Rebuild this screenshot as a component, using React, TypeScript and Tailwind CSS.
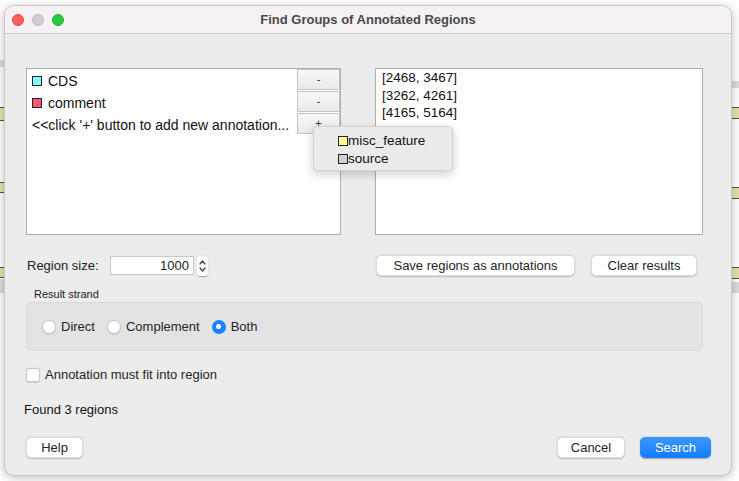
import React from "react";

const font = { fontFamily: '"Liberation Sans", Arial, sans-serif' };

function TrafficLights() {
  return (
    <div className="flex items-center gap-[8px] pl-[7px]">
      <span className="w-[12px] h-[12px] rounded-full bg-[#fe5f57] border border-[#e2463f]" />
      <span className="w-[12px] h-[12px] rounded-full bg-[#d1cdd2] border border-[#bfbbc0]" />
      <span className="w-[12px] h-[12px] rounded-full bg-[#28c840] border border-[#1aab29]" />
    </div>
  );
}

function RowButton(props: { label: string }) {
  return (
    <div className="w-[43px] h-[21px] mb-[1px] flex items-center justify-center bg-gradient-to-b from-[#f7f7f7] to-[#ebebeb] border border-[#c4c4c4] text-[11px] text-[#333] leading-none">
      {props.label}
    </div>
  );
}

function Radio(props: { checked?: boolean; label: string }) {
  return (
    <label className="flex items-center gap-[5px] mr-[12px]">
      {props.checked ? (
        <span className="w-[14px] h-[14px] rounded-full bg-[#1a82fb] flex items-center justify-center">
          <span className="w-[5px] h-[5px] rounded-full bg-white" />
        </span>
      ) : (
        <span className="w-[14px] h-[14px] rounded-full bg-white border border-[#c6c6c6] shadow-[0_0.5px_1px_rgba(0,0,0,0.15)]" />
      )}
      <span className="text-[13px] text-[#262626]">{props.label}</span>
    </label>
  );
}

function MacButton(props: { label: string; width: string; primary?: boolean }) {
  return (
    <button
      className={
        props.primary
          ? `${props.width} h-[21px] rounded-[5px] bg-gradient-to-b from-[#3b98fd] to-[#0f7bfd] text-white text-[13px] leading-none shadow-[0_0.5px_1.5px_rgba(0,0,0,0.3)]`
          : `${props.width} h-[21px] rounded-[5px] bg-white text-[#262626] text-[13px] leading-none border border-[#dcdcdc] shadow-[0_0.5px_1.5px_rgba(0,0,0,0.2)]`
      }
    >
      {props.label}
    </button>
  );
}

export default function App() {
  return (
    <div
      className="relative w-[739px] h-[481px] bg-white overflow-hidden pl-[4px] pt-[5px]"
      style={font}
    >
      {/* bits of the window behind */}
      <div className="absolute right-0 top-[81px] w-[10px] h-[7px] bg-[#dcdcdc]" />
      <div className="absolute right-0 top-[107px] w-[10px] h-[12px] bg-[#e4e2a8] border-y border-[#555]" />
      <div className="absolute right-0 top-[187px] w-[10px] h-[12px] bg-[#e4e2a8] border-y border-[#555]" />
      <div className="absolute right-0 top-[267px] w-[10px] h-[12px] bg-[#e4e2a8] border-y border-[#555]" />
      <div className="absolute right-0 top-[282px] w-[10px] h-[11px] bg-[#dcdcdc]" />
      <div className="absolute left-0 top-[60px] w-[4px] h-[7px] bg-[#dcdcdc]" />
      <div className="absolute left-0 top-[107px] w-[4px] h-[14px] bg-[#e4e2a8] border-y border-[#555]" />
      <div className="absolute left-0 top-[182px] w-[4px] h-[11px] bg-[#e4e2a8] border-y border-[#555]" />
      <div className="absolute left-0 top-[267px] w-[4px] h-[11px] bg-[#e4e2a8] border-y border-[#555]" />
      <div className="absolute left-0 top-[279px] w-[4px] h-[14px] bg-[#dcdcdc]" />

      <div className="relative w-[728px] h-[471px] rounded-[10px] overflow-hidden border border-[#c9c6c9] shadow-[0_2px_10px_rgba(0,0,0,0.25)] flex flex-col bg-[#ececec]">
        {/* title bar */}
        <div className="h-[28px] shrink-0 bg-[#f6f1f5] border-b border-[#c8c8c8] relative flex items-center">
          <TrafficLights />
          <div className="absolute inset-0 flex items-center justify-center text-[13px] font-bold text-[#4a4a4a] pointer-events-none">
            Find Groups of Annotated Regions
          </div>
        </div>

        {/* body */}
        <div className="flex-1 flex flex-col pl-[21px] pr-[28px] pt-[34px] text-[#222]">
          <div className="flex gap-[34px]">
            {/* annotation list */}
            <div className="relative w-[315px] h-[167px] bg-white border border-[#acacac] flex">
              <div className="flex-1 pl-[5px] pt-[1px] text-[14px] text-[#111]">
                <div className="h-[22px] flex items-center gap-[6px]">
                  <span className="w-[10px] h-[10px] bg-[#80ffff] border border-[#222]" />
                  CDS
                </div>
                <div className="h-[22px] flex items-center gap-[6px]">
                  <span className="w-[10px] h-[10px] bg-[#f7586f] border border-[#222]" />
                  comment
                </div>
                <div className="h-[22px] flex items-center">
                  {"<<click '+' button to add new annotation..."}
                </div>
              </div>
              <div className="flex flex-col">
                <RowButton label="-" />
                <RowButton label="-" />
                <RowButton label="+" />
              </div>

              {/* popup menu */}
              <div className="absolute left-[286px] top-[57px] w-[140px] h-[45px] z-10 rounded-[4px] bg-[#ebebeb] border border-[#d2d2d2] shadow-[0_3px_10px_rgba(0,0,0,0.2)] pt-[5px] pl-[24px] text-[13.5px] text-[#111]">
                <div className="h-[18px] flex items-center">
                  <span className="w-[10px] h-[10px] bg-[#ffff99] border border-[#222]" />
                  misc_feature
                </div>
                <div className="h-[18px] flex items-center">
                  <span className="w-[10px] h-[10px] bg-[#d0d0d0] border border-[#222]" />
                  source
                </div>
              </div>
            </div>

            {/* results list */}
            <div className="w-[328px] h-[167px] bg-white border border-[#acacac] pl-[6px] text-[13.5px] text-[#111] leading-[17.5px]">
              <div>[2468, 3467]</div>
              <div>[3262, 4261]</div>
              <div>[4165, 5164]</div>
            </div>
          </div>

          {/* region size row */}
          <div className="flex items-center mt-[20px] h-[21px]">
            <span className="text-[13px] w-[84px] pl-[1px]">Region size:</span>
            <div className="w-[84px] h-[19px] bg-white border border-[#c8c8c8] text-[13px] text-right pr-[4px] leading-[18px]">
              1000
            </div>
            <div className="ml-[3px] w-[11px] h-[20px] rounded-[3px] bg-white shadow-[0_0.5px_1px_rgba(0,0,0,0.3)] flex flex-col items-center justify-center">
              <svg width="9" height="18" viewBox="0 0 9 18" fill="none" stroke="#444" strokeWidth="1.3" strokeLinecap="round" strokeLinejoin="round">
                <path d="M2 7 L4.5 4 L7 7" />
                <path d="M2 11 L4.5 14 L7 11" />
              </svg>
            </div>
            <div className="flex-1" />
            <MacButton label="Save regions as annotations" width="w-[199px]" />
            <div className="w-[16px]" />
            <MacButton label="Clear results" width="w-[106px]" />
            <div className="w-[6px]" />
          </div>

          {/* result strand */}
          <div className="mt-[12px] pl-[8px] text-[11px] text-[#222] leading-[13px]">Result strand</div>
          <div className="mt-[1px] w-[677px] h-[49px] rounded-[4px] bg-[#e3e3e3] border border-[#d9d9d9] flex items-center pl-[15px]">
            <Radio label="Direct" />
            <Radio label="Complement" />
            <Radio label="Both" checked />
          </div>

          {/* checkbox */}
          <label className="mt-[14px] flex items-center gap-[5px]">
            <span className="w-[14px] h-[14px] rounded-[3px] bg-white border border-[#c6c6c6] shadow-[0_0.5px_1px_rgba(0,0,0,0.15)]" />
            <span className="text-[13px] text-[#262626]">Annotation must fit into region</span>
          </label>

          <div className="mt-[15px] text-[13px] text-[#111] -ml-[2px]">Found 3 regions</div>

          {/* footer buttons */}
          <div className="mt-[18px] flex items-center -mr-[8px]">
            <MacButton label="Help" width="w-[57px]" />
            <div className="flex-1" />
            <MacButton label="Cancel" width="w-[68px]" />
            <div className="w-[15px]" />
            <MacButton label="Search" width="w-[71px]" primary />
          </div>
        </div>
      </div>
    </div>
  );
}
